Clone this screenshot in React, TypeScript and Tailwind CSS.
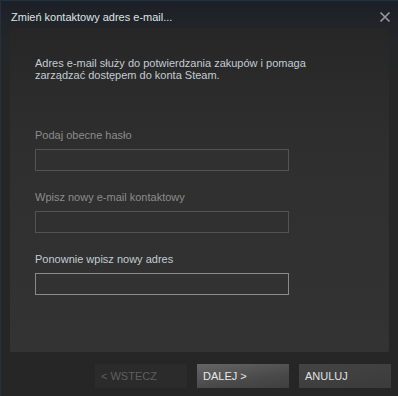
import React from "react";

export default function App() {
  const font = { fontFamily: '"Liberation Sans", Arial, sans-serif' };
  return (
    <div
      className="w-[398px] h-[396px] relative overflow-hidden bg-[linear-gradient(180deg,#1c2027_0px,#242628_40px,#262626_80px)] border-l border-t border-[#22303f] flex flex-col"
      style={font}
    >
      <div className="h-[27px] flex items-center justify-between pl-[10px] pr-[7px] shrink-0">
        <span className="text-[11px] text-[#dfe3e6] leading-[12px] mt-[5px]">Zmień kontaktowy adres e-mail...</span>
        <svg width="12" height="12" viewBox="0 0 12 12" className="mt-[4px]">
          <path d="M1.5 1.5 L10.5 10.5 M10.5 1.5 L1.5 10.5" stroke="#9a9a9a" strokeWidth="1.6" />
        </svg>
      </div>
      <div className="mx-[9px] h-[324px] rounded-b-[2px] bg-[linear-gradient(180deg,#262626_0px,#2b2b2b_60px,#2f2f2f_130px,#333333_324px)] pt-[29px] pl-[25px] flex flex-col">
        <p className="text-[11px] leading-[12px] text-[#c3ccd3] w-[300px]">
          Adres e-mail służy do potwierdzania zakupów i pomaga zarządzać dostępem do konta Steam.
        </p>
        <div className="mt-[48px] text-[11px] leading-[12px] text-[#8c8c8c]">Podaj obecne hasło</div>
        <div className="mt-[8px] w-[254px] h-[22px] border border-[#535353] bg-[#303030]" />
        <div className="mt-[20px] text-[11px] leading-[12px] text-[#8c8c8c]">Wpisz nowy e-mail kontaktowy</div>
        <div className="mt-[8px] w-[254px] h-[22px] border border-[#535353] bg-[#303030]" />
        <div className="mt-[20px] text-[11px] leading-[12px] text-[#c3ccd3]">Ponownie wpisz nowy adres</div>
        <div className="mt-[8px] w-[254px] h-[22px] border border-[#8a8a8a] bg-[#323232]" />
      </div>
      <div className="flex justify-end gap-[10px] pr-[7px] mt-[12px]">
        <div className="w-[92px] h-[24px] bg-[#2b2b2b] flex items-center pl-[6px] text-[11px] text-[#5f5f5f]">&lt; WSTECZ</div>
        <div className="w-[92px] h-[24px] bg-[linear-gradient(170deg,#666666_0%,#4a4a4a_60%,#3f3f3f_100%)] flex items-center pl-[6px] text-[11px] text-[#e8e8e8]">DALEJ &gt;</div>
        <div className="w-[92px] h-[24px] bg-[linear-gradient(170deg,#444444_0%,#3b3b3b_100%)] flex items-center pl-[6px] text-[11px] text-[#e0e0e0]">ANULUJ</div>
      </div>
    </div>
  );
}
